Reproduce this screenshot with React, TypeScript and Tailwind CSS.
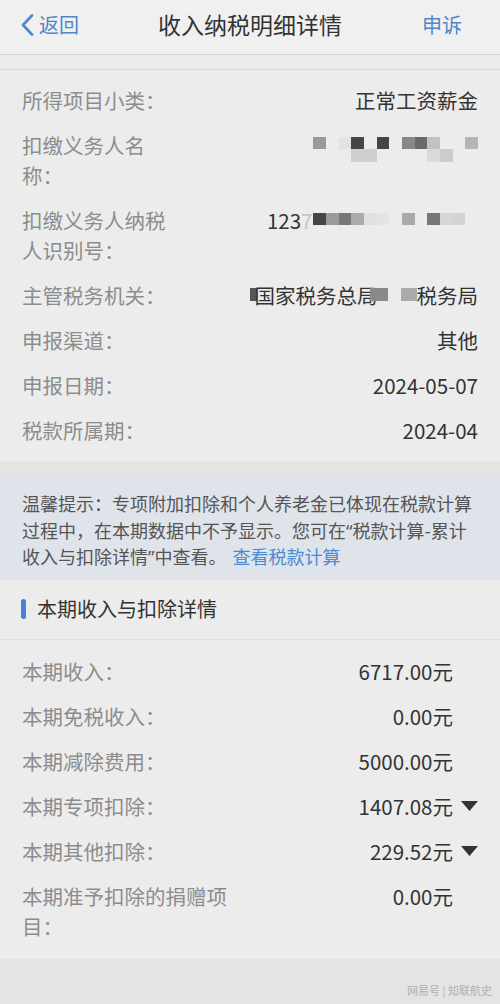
import React from "react";

type Cell = string | null;

function Mosaic({ rows, size = 12.67 }: { rows: Cell[][]; size?: number }) {
  return (
    <div className="flex flex-col">
      {rows.map((row, i) => (
        <div key={i} className="flex">
          {row.map((c, j) => (
            <div
              key={j}
              style={{ width: size, height: size, background: c ?? "transparent" }}
            />
          ))}
        </div>
      ))}
    </div>
  );
}

function InfoRow({
  label,
  children,
  labelWidth = "w-[150px]",
}: {
  label: string;
  children: React.ReactNode;
  labelWidth?: string;
}) {
  return (
    <div className="flex items-start justify-between py-[7.5px] leading-[30px]">
      <div className={`${labelWidth} shrink-0 text-[#8d8d8d]`}>{label}</div>
      <div className="flex min-w-0 flex-1 justify-end text-[#333]">{children}</div>
    </div>
  );
}

function Caret() {
  return (
    <svg width="17" height="11" viewBox="0 0 17 11" className="mt-[10px]">
      <path d="M0 0 H17 L8.5 10 Z" fill="#333" />
    </svg>
  );
}

function AmountRow({ label, amount, caret }: { label: string; amount: string; caret?: boolean }) {
  return (
    <div className="flex items-start justify-between py-[7.5px] leading-[30px]">
      <div className="w-[215px] shrink-0 text-[#8d8d8d]">{label}</div>
      <div className="flex flex-1 justify-end">
        <span className="text-[#333]">{amount}</span>
        <span className="ml-[8px] flex w-[17px] justify-end">{caret ? <Caret /> : null}</span>
      </div>
    </div>
  );
}

// latin quote marks render narrow, like the app does
function Q({ children }: { children: string }) {
  return <span className="font-['Noto_Sans',sans-serif] leading-none">{children}</span>;
}

export default function App() {
  const g1 = "#999";
  return (
    <div className="flex min-h-[1004px] w-[500px] flex-col bg-[#e4e4e4] font-['Noto_Sans_CJK_SC','Noto_Sans',sans-serif] text-[20.5px]">
      {/* nav */}
      <header className="flex h-[55px] items-center justify-between border-b border-[#d6d6d6] bg-[#f0f0f0] px-[21px] pb-[5px]">
        <div className="flex w-[90px] items-center text-[20px] text-[#4f86cc]">
          <svg width="13" height="22" viewBox="0 0 13 22" className="mr-[5px]">
            <path d="M11 1.5 L2 11 L11 20.5" fill="none" stroke="#4f86cc" strokeWidth="2.6" strokeLinecap="round" strokeLinejoin="round" />
          </svg>
          返回
        </div>
        <h1 className="text-[23px] text-[#333]">收入纳税明细详情</h1>
        <div className="flex w-[90px] justify-end pr-[17px] text-[20px] text-[#4f86cc]">申诉</div>
      </header>
      <div className="h-[15px] border-b border-[#d9d9d9] bg-[#ececec]" />

      {/* details */}
      <section className="bg-[#ececec] px-[22px] pt-[7px] pb-[9px]">
        <InfoRow label="所得项目小类：">正常工资薪金</InfoRow>
        <InfoRow label="扣缴义务人名称：">
          <div className="mt-[7px]">
            <Mosaic
              rows={[
                [g1, null, "#e2e2e2", "#454545", null, "#454545", null, "#888", "#6a6a6a", "#c2c2c2", null, null, "#b5b5b5"],
                [null, null, null, "#cfcfcf", "#cfcfcf", null, null, null, null, "#dadada", "#cccccc", null, null],
              ]}
            />
          </div>
        </InfoRow>
        <InfoRow label="扣缴义务人纳税人识别号：">
          <div className="flex items-start">
            <span>123</span>
            <span className="text-[#c4c4c4]">7</span>
            <div className="mt-[8px] ml-[1px]">
              <Mosaic
                rows={[["#444", "#9a9a9a", "#777", "#aaa", "#e0e0e0", "#e4e4e4", null, "#aaa", null, "#777", "#d6d6d6", "#d4d4d4", null]]}
              />
            </div>
          </div>
        </InfoRow>
        <InfoRow label="主管税务机关：">
          <div className="flex items-center">
            <div className="mr-[-2px] h-[13px] w-[7px] bg-[#555]" />
            <span>国家税务总局</span>
            <div className="ml-[-8px] h-[13px] w-[18px] bg-[#8a8a8a]" />
            <div className="ml-[13px] h-[13px] w-[16px] bg-[#ababab]" />
            <span>税务局</span>
          </div>
        </InfoRow>
        <InfoRow label="申报渠道：">其他</InfoRow>
        <InfoRow label="申报日期：">2024-05-07</InfoRow>
        <InfoRow label="税款所属期：">2024-04</InfoRow>
      </section>

      <div className="h-[15px]" />

      {/* tip */}
      <div className="bg-[#dfe4ea] px-[22px] pt-[14px] pb-[10px] text-[18px] leading-[26.5px] text-[#555]">
        温馨提示：专项附加扣除和个人养老金已体现在税款计算过程中，在本期数据中不予显示。您可在<Q>“</Q>税款计算-累计收入与扣除详情<Q>”</Q>中查看。
        <span className="ml-[6px] text-[#4a8ad4]">查看税款计算</span>
      </div>

      {/* section header */}
      <div className="flex h-[60px] items-center border-b border-[#dedede] bg-[#ececec] px-[21px]">
        <div className="mr-[11px] h-[20px] w-[5px] rounded-full bg-[#4a80d8]" />
        <h2 className="text-[20px] text-[#333]">本期收入与扣除详情</h2>
      </div>

      <section className="bg-[#ececec] px-[22px] pt-[9px] pb-[10px]">
        <AmountRow label="本期收入：" amount="6717.00元" />
        <AmountRow label="本期免税收入：" amount="0.00元" />
        <AmountRow label="本期减除费用：" amount="5000.00元" />
        <AmountRow label="本期专项扣除：" amount="1407.08元" caret />
        <AmountRow label="本期其他扣除：" amount="229.52元" caret />
        <AmountRow label="本期准予扣除的捐赠项目：" amount="0.00元" />
      </section>

      <div className="flex flex-1 items-end justify-end px-[8px] pb-[6px]">
        <span className="text-[11px] text-[#b0b0b0]">网易号 | 知联航史</span>
      </div>
    </div>
  );
}
